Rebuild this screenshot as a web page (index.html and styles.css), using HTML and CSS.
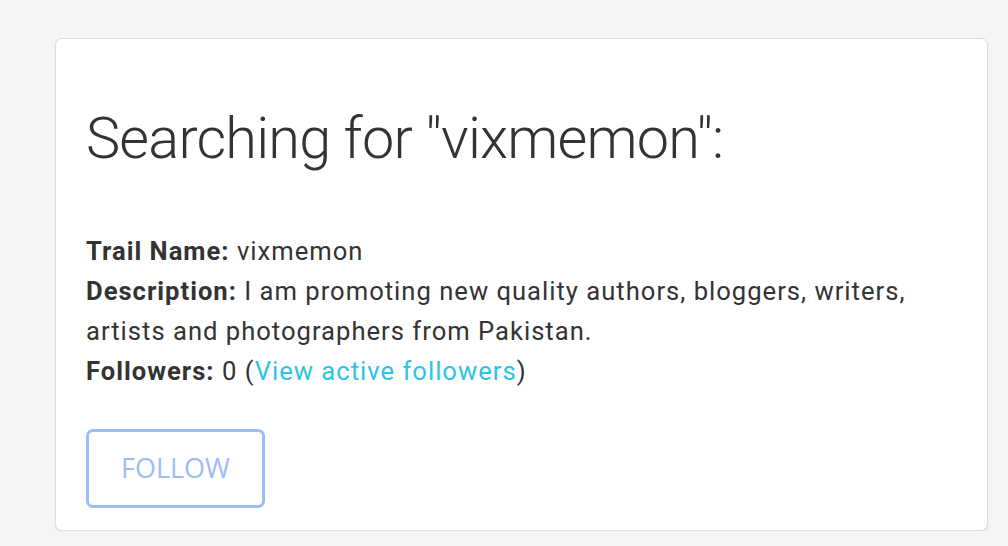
FILE: index.html
```html
<!DOCTYPE html>
<html lang="en">
<head>
<meta charset="utf-8">
<title>Trail search</title>
<link rel="stylesheet" href="styles.css">
</head>
<body>
<main class="page">
  <section class="card">
    <h1 class="title">Searching for "vixmemon":</h1>
    <div class="details">
      <div class="row"><strong>Trail Name:</strong> vixmemon</div>
      <div class="row"><strong>Description:</strong> I am promoting new quality authors, bloggers, writers, artists and photographers from Pakistan.</div>
      <div class="row"><strong>Followers:</strong> 0 (<a class="link" href="#">View active followers</a>)</div>
    </div>
    <div class="actions">
      <button class="follow" type="button">FOLLOW</button>
    </div>
  </section>
</main>
</body>
</html>
```

FILE: styles.css
```css
html, body {
  margin: 0;
  padding: 0;
  background: #f5f5f5;
}
body {
  font-family: Roboto, "Liberation Sans", sans-serif;
  color: #333333;
}
.page {
  padding: 38px 20px 0 55px;
}
.card {
  box-sizing: border-box;
  width: 933px;
  height: 493px;
  background: #ffffff;
  border: 1px solid #dcdcdc;
  border-radius: 7px;
  box-shadow: 0 1px 2px rgba(0, 0, 0, 0.10);
  padding: 65px 30px 22px 30px;
  display: flex;
  flex-direction: column;
}
.title {
  margin: 0;
  font-size: 57.6px;
  font-weight: 300;
  line-height: 69px;
  letter-spacing: -0.8px;
  color: #333333;
}
.details {
  margin-top: 58px;
  font-size: 25.6px;
  line-height: 40px;
  letter-spacing: 1px;
  max-width: 850px;
}
.details strong {
  font-weight: 700;
}
.link {
  color: #2bc4e6;
  text-decoration: none;
}
.actions {
  margin-top: 38px;
  display: flex;
}
.follow {
  box-sizing: border-box;
  width: 179px;
  height: 79px;
  background: #ffffff;
  border: 3px solid #9dbdf7;
  border-radius: 7px;
  color: #9dbdf7;
  font-family: "Open Sans", Roboto, sans-serif;
  font-size: 27px;
  font-weight: 400;
  padding: 0 0 3px 0;
  cursor: pointer;
}
```
